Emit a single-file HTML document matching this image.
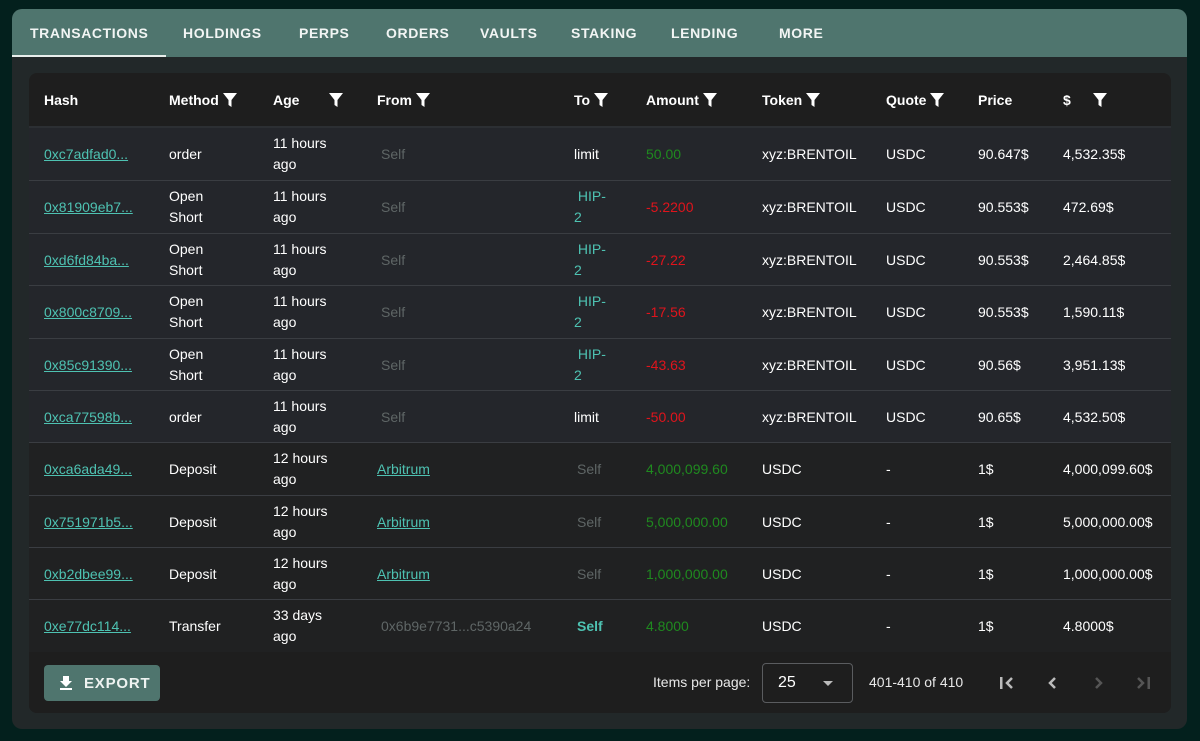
<!DOCTYPE html>
<html><head><meta charset="utf-8"><style>
*{margin:0;padding:0;box-sizing:border-box}
body{width:1200px;height:741px;background:#03201d;font-family:"Liberation Sans",sans-serif;overflow:hidden;position:relative;color:#fff;font-size:14px}
.card{position:absolute;left:12px;top:9px;width:1175px;height:720px;background:#222829;border-radius:10px;overflow:hidden}
.tabs{position:absolute;left:0;top:0;width:100%;height:48px;background:#4f756e}
.tab{position:absolute;top:16px;font-weight:bold;font-size:14px;letter-spacing:0.6px;color:#f2f5f4}
.ind{position:absolute;left:0;top:46px;width:154px;height:2px;background:#e8eeec}
.tbl{position:absolute;left:29px;top:73px;width:1142px;height:640px;background:#1e1e1e;border-radius:8px;overflow:hidden}
.hdr{position:absolute;left:0;top:0;width:100%;height:55px;border-bottom:2px solid #2c2f33}
.h{position:absolute;top:18px;height:18px;font-weight:bold;font-size:14px;display:flex;align-items:center;gap:3px}
.h svg{width:16px;height:18px}
.row{position:absolute;left:0;width:100%;height:55px;border-top:1px solid #3a3d42}
.c{position:absolute;top:0;height:52px;display:flex;align-items:center;line-height:21px;font-size:14px}
.lk{color:#4ec2b2;text-decoration:underline}
.g{color:#5f6666}
.gr{color:#1f8a1f}
.rd{color:#e0141c}
.tl{color:#4ec2b2}
.foot{position:absolute;left:0;top:579px;width:100%;height:61px;background:#1e1e1e}
</style></head><body>
<div class="card">
<div class="tabs">
<div class="tab" style="left:18px">TRANSACTIONS</div>
<div class="tab" style="left:171px">HOLDINGS</div>
<div class="tab" style="left:287px">PERPS</div>
<div class="tab" style="left:374px">ORDERS</div>
<div class="tab" style="left:468px">VAULTS</div>
<div class="tab" style="left:559px">STAKING</div>
<div class="tab" style="left:659px">LENDING</div>
<div class="tab" style="left:767px">MORE</div>
<div class="ind"></div>
</div>
</div>
<div class="tbl">
<div class="hdr">
<div class="h" style="left:15px">Hash</div>
<div class="h" style="left:140px">Method<svg viewBox="0 0 16 18"><path d="M1 2h14l-5.5 7v7l-3-2v-5z" fill="#fff"/></svg></div>
<div class="h" style="left:244px">Age<svg viewBox="0 0 16 18" style="margin-left:26px"><path d="M1 2h14l-5.5 7v7l-3-2v-5z" fill="#fff"/></svg></div>
<div class="h" style="left:348px">From<svg viewBox="0 0 16 18"><path d="M1 2h14l-5.5 7v7l-3-2v-5z" fill="#fff"/></svg></div>
<div class="h" style="left:545px">To<svg viewBox="0 0 16 18"><path d="M1 2h14l-5.5 7v7l-3-2v-5z" fill="#fff"/></svg></div>
<div class="h" style="left:617px">Amount<svg viewBox="0 0 16 18"><path d="M1 2h14l-5.5 7v7l-3-2v-5z" fill="#fff"/></svg></div>
<div class="h" style="left:733px">Token<svg viewBox="0 0 16 18"><path d="M1 2h14l-5.5 7v7l-3-2v-5z" fill="#fff"/></svg></div>
<div class="h" style="left:857px">Quote<svg viewBox="0 0 16 18"><path d="M1 2h14l-5.5 7v7l-3-2v-5z" fill="#fff"/></svg></div>
<div class="h" style="left:949px">Price</div>
<div class="h" style="left:1034px">$<svg viewBox="0 0 16 18" style="margin-left:18px"><path d="M1 2h14l-5.5 7v7l-3-2v-5z" fill="#fff"/></svg></div>
</div>

<div class="row" style="top:55px;background:#24262b;border-top:none">
<div class="c lk" style="left:15px">0xc7adfad0...</div><div class="c" style="left:140px">order</div><div class="c" style="left:244px">11 hours<br>ago</div><div class="c g" style="left:352px">Self</div><div class="c" style="left:545px">limit</div><div class="c gr" style="left:617px">50.00</div><div class="c" style="left:733px">xyz:BRENTOIL</div><div class="c" style="left:857px">USDC</div><div class="c" style="left:949px">90.647$</div><div class="c" style="left:1034px">4,532.35$</div></div>

<div class="row" style="top:107px;background:#24262b">
<div class="c lk" style="left:15px">0x81909eb7...</div><div class="c" style="left:140px">Open<br>Short</div><div class="c" style="left:244px">11 hours<br>ago</div><div class="c g" style="left:352px">Self</div><div class="c tl" style="left:545px">&nbsp;HIP-<br>2</div><div class="c rd" style="left:617px">-5.2200</div><div class="c" style="left:733px">xyz:BRENTOIL</div><div class="c" style="left:857px">USDC</div><div class="c" style="left:949px">90.553$</div><div class="c" style="left:1034px">472.69$</div></div>

<div class="row" style="top:160px;background:#24262b">
<div class="c lk" style="left:15px">0xd6fd84ba...</div><div class="c" style="left:140px">Open<br>Short</div><div class="c" style="left:244px">11 hours<br>ago</div><div class="c g" style="left:352px">Self</div><div class="c tl" style="left:545px">&nbsp;HIP-<br>2</div><div class="c rd" style="left:617px">-27.22</div><div class="c" style="left:733px">xyz:BRENTOIL</div><div class="c" style="left:857px">USDC</div><div class="c" style="left:949px">90.553$</div><div class="c" style="left:1034px">2,464.85$</div></div>

<div class="row" style="top:212px;background:#24262b">
<div class="c lk" style="left:15px">0x800c8709...</div><div class="c" style="left:140px">Open<br>Short</div><div class="c" style="left:244px">11 hours<br>ago</div><div class="c g" style="left:352px">Self</div><div class="c tl" style="left:545px">&nbsp;HIP-<br>2</div><div class="c rd" style="left:617px">-17.56</div><div class="c" style="left:733px">xyz:BRENTOIL</div><div class="c" style="left:857px">USDC</div><div class="c" style="left:949px">90.553$</div><div class="c" style="left:1034px">1,590.11$</div></div>

<div class="row" style="top:265px;background:#24262b">
<div class="c lk" style="left:15px">0x85c91390...</div><div class="c" style="left:140px">Open<br>Short</div><div class="c" style="left:244px">11 hours<br>ago</div><div class="c g" style="left:352px">Self</div><div class="c tl" style="left:545px">&nbsp;HIP-<br>2</div><div class="c rd" style="left:617px">-43.63</div><div class="c" style="left:733px">xyz:BRENTOIL</div><div class="c" style="left:857px">USDC</div><div class="c" style="left:949px">90.56$</div><div class="c" style="left:1034px">3,951.13$</div></div>

<div class="row" style="top:317px;background:#24262b">
<div class="c lk" style="left:15px">0xca77598b...</div><div class="c" style="left:140px">order</div><div class="c" style="left:244px">11 hours<br>ago</div><div class="c g" style="left:352px">Self</div><div class="c" style="left:545px">limit</div><div class="c rd" style="left:617px">-50.00</div><div class="c" style="left:733px">xyz:BRENTOIL</div><div class="c" style="left:857px">USDC</div><div class="c" style="left:949px">90.65$</div><div class="c" style="left:1034px">4,532.50$</div></div>

<div class="row" style="top:369px;background:#202122">
<div class="c lk" style="left:15px">0xca6ada49...</div><div class="c" style="left:140px">Deposit</div><div class="c" style="left:244px">12 hours<br>ago</div><div class="c lk" style="left:348px">Arbitrum</div><div class="c g" style="left:548px">Self</div><div class="c gr" style="left:617px">4,000,099.60</div><div class="c" style="left:733px">USDC</div><div class="c" style="left:857px">-</div><div class="c" style="left:949px">1$</div><div class="c" style="left:1034px">4,000,099.60$</div></div>

<div class="row" style="top:422px;background:#202122">
<div class="c lk" style="left:15px">0x751971b5...</div><div class="c" style="left:140px">Deposit</div><div class="c" style="left:244px">12 hours<br>ago</div><div class="c lk" style="left:348px">Arbitrum</div><div class="c g" style="left:548px">Self</div><div class="c gr" style="left:617px">5,000,000.00</div><div class="c" style="left:733px">USDC</div><div class="c" style="left:857px">-</div><div class="c" style="left:949px">1$</div><div class="c" style="left:1034px">5,000,000.00$</div></div>

<div class="row" style="top:474px;background:#202122">
<div class="c lk" style="left:15px">0xb2dbee99...</div><div class="c" style="left:140px">Deposit</div><div class="c" style="left:244px">12 hours<br>ago</div><div class="c lk" style="left:348px">Arbitrum</div><div class="c g" style="left:548px">Self</div><div class="c gr" style="left:617px">1,000,000.00</div><div class="c" style="left:733px">USDC</div><div class="c" style="left:857px">-</div><div class="c" style="left:949px">1$</div><div class="c" style="left:1034px">1,000,000.00$</div></div>

<div class="row" style="top:526px;background:#202122">
<div class="c lk" style="left:15px">0xe77dc114...</div><div class="c" style="left:140px">Transfer</div><div class="c" style="left:244px">33 days<br>ago</div><div class="c g" style="left:352px">0x6b9e7731...c5390a24</div><div class="c tl" style="left:548px;font-weight:bold">Self</div><div class="c gr" style="left:617px">4.8000</div><div class="c" style="left:733px">USDC</div><div class="c" style="left:857px">-</div><div class="c" style="left:949px">1$</div><div class="c" style="left:1034px">4.8000$</div></div>

<div class="foot">
<div style="position:absolute;left:15px;top:13px;width:116px;height:36px;background:#4f756e;border-radius:4px;display:flex;align-items:center;font-weight:bold;font-size:15px;letter-spacing:0.8px;color:#eef3f1">
<svg width="14" height="16" viewBox="0 0 14 16" style="margin-left:15px;margin-right:11px"><path d="M4 1h6v5h3l-6 6-6-6h3z" fill="#fff"/><rect x="1" y="13" width="12" height="2" fill="#fff"/></svg>EXPORT</div>
<div style="position:absolute;left:624px;top:22px;font-size:14px;color:#e8e8e8">Items per page:</div>
<div style="position:absolute;left:733px;top:11px;width:91px;height:40px;border:1px solid #5a5c5f;border-radius:4px">
<span style="position:absolute;left:15px;top:10px;font-size:16px">25</span>
<span style="position:absolute;left:60px;top:17px;width:0;height:0;border-left:5px solid transparent;border-right:5px solid transparent;border-top:5px solid #bbb"></span></div>
<div style="position:absolute;left:840px;top:22px;font-size:14px;color:#e8e8e8">401-410 of 410</div>
<svg style="position:absolute;left:969px;top:22px" width="18" height="18" viewBox="0 0 18 18"><rect x="2" y="3" width="2.5" height="12" fill="#bbb"/><path d="M14 4l-5 5 5 5" stroke="#bbb" stroke-width="2.5" fill="none"/></svg>
<svg style="position:absolute;left:1015px;top:22px" width="18" height="18" viewBox="0 0 18 18"><path d="M11 4l-5 5 5 5" stroke="#bbb" stroke-width="2.5" fill="none"/></svg>
<svg style="position:absolute;left:1060px;top:22px" width="18" height="18" viewBox="0 0 18 18"><path d="M7 4l5 5-5 5" stroke="#555" stroke-width="2.5" fill="none"/></svg>
<svg style="position:absolute;left:1105px;top:22px" width="18" height="18" viewBox="0 0 18 18"><path d="M4 4l5 5-5 5" stroke="#555" stroke-width="2.5" fill="none"/><rect x="13.5" y="3" width="2.5" height="12" fill="#555"/></svg>
</div>
</div>
</body></html>
